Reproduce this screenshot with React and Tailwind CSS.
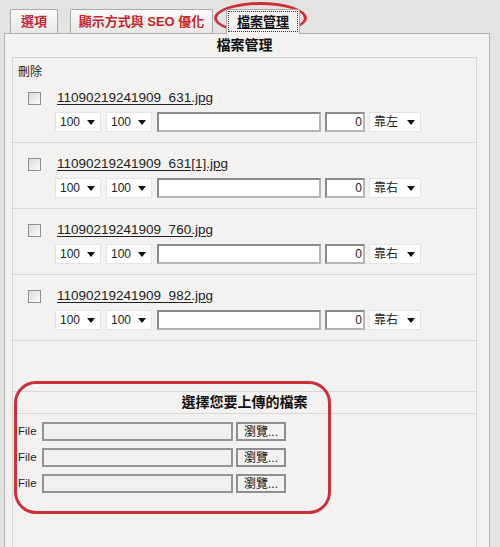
const FONT = { fontFamily: '"Liberation Sans", Arial, "Noto Sans CJK TC", sans-serif' };

const files = [
  { name: '11090219241909_631.jpg', align: '靠左' },
  { name: '11090219241909_631[1].jpg', align: '靠右' },
  { name: '11090219241909_760.jpg', align: '靠右' },
  { name: '11090219241909_982.jpg', align: '靠右' },
];

function Arrow() {
  return (
    <svg width="8" height="5" viewBox="0 0 8 5" className="shrink-0">
      <path d="M0 0h8L4 5z" fill="#111" />
    </svg>
  );
}

function Select({ value, w }) {
  return (
    <div
      className={`${w} h-[20px] bg-white border border-[#e4e4e4] flex items-center justify-between pl-[4px] pr-[5px] text-[12px] text-[#222]`}
    >
      <span>{value}</span>
      <Arrow />
    </div>
  );
}

function FileRow({ file }) {
  return (
    <div className="pl-[15px] pt-[14px] pb-[10px] border-b border-[#d9d8d6]">
      <div className="h-[14px] flex items-center">
        <span className="w-[13px] h-[13px] border border-[#8f8f8f] bg-gradient-to-br from-[#dcdcdc] to-[#fbfbfb] shrink-0" />
        <a className="ml-[16px] text-[13.5px] leading-[14px] text-[#222] underline underline-offset-2">
          {file.name}
        </a>
      </div>
      <div className="mt-[7px] ml-[27px] flex items-center">
        <Select value="100" w="w-[46px]" />
        <div className="ml-[5px]">
          <Select value="100" w="w-[46px]" />
        </div>
        <div className="ml-[5px] w-[164px] h-[20px] bg-white border-2 border-t-[#8a8a8a] border-l-[#8a8a8a] border-b-[#b5b5b5] border-r-[#b5b5b5]" />
        <div className="ml-[4px] w-[40px] h-[20px] bg-white border-2 border-t-[#8a8a8a] border-l-[#8a8a8a] border-b-[#b5b5b5] border-r-[#b5b5b5] flex items-center justify-end pr-[1px] text-[12px] text-[#222]">
          0
        </div>
        <div className="ml-[4px]">
          <Select value={file.align} w="w-[52px]" />
        </div>
      </div>
    </div>
  );
}

function UploadRow() {
  return (
    <div className="flex items-center h-[19px] mb-[7px]">
      <span className="w-[24px] text-[11.5px] text-[#222]">File</span>
      <div className="w-[191px] h-[19px] bg-[#f1f0ee] border-2 border-[#959595]" />
      <div className="ml-[3px] w-[50px] h-[19px] bg-[#f2f2f2] border-2 border-[#8f8f8f] flex items-center justify-center text-[12px] text-[#111]">
        瀏覽...
      </div>
    </div>
  );
}

export default function App() {
  return (
    <div className="relative w-[500px] h-[547px] overflow-hidden bg-[#e5e3e1]" style={FONT}>
      {/* tabs */}
      <div className="h-[33px] flex items-end">
        <div className="ml-[10px] w-[48px] h-[24px] border border-b-0 border-[#aaa] rounded-t-[2px] bg-gradient-to-b from-[#fafafa] to-[#e9e8e6] flex items-center justify-center text-[13px] font-bold text-[#c1272d]">
          選項
        </div>
        <div className="ml-[12px] w-[143px] h-[24px] border border-b-0 border-[#aaa] rounded-t-[2px] bg-gradient-to-b from-[#fafafa] to-[#e9e8e6] flex items-center justify-center text-[13px] font-bold text-[#c1272d]">
          顯示方式與 SEO 優化
        </div>
        <div className="ml-[13px] w-[74px] h-[25px] -mb-px relative z-10 border border-b-0 border-[#aaa] bg-[#f3f2f0] flex items-start justify-center pt-[1px]">
          <span className="w-[70px] h-[21px] border border-dotted border-[#333] flex items-center justify-center text-[13px] font-bold text-[#111] underline underline-offset-2">
            檔案管理
          </span>
        </div>
      </div>

      {/* panel */}
      <div className="ml-[4px] w-[486px] h-[600px] border border-[#b3b3b3] bg-[#f3f2f0] pl-[7px]">
        <div className="w-[465px] h-[23px] flex items-center justify-center text-[14px] font-bold text-[#111]">
          檔案管理
        </div>
        <div className="w-[465px] h-[600px] border border-[#d6d5d3]">
          <div className="h-[19px] pl-[5px] pt-[8px] text-[12px] leading-[12px] text-[#222]">刪除</div>
          {files.map((f) => (
            <FileRow key={f.name} file={f} />
          ))}
          <div className="h-[51px] border-b border-[#d9d8d6]" />
          <div className="h-[22px] flex items-center justify-center text-[14px] font-bold text-[#111] border-b border-[#d9d8d6]">
            選擇您要上傳的檔案
          </div>
          <div className="pl-[5px] pt-[8px]">
            <UploadRow />
            <UploadRow />
            <UploadRow />
          </div>
        </div>
      </div>

      {/* red annotations */}
      <div className="absolute left-[214px] top-[2px] w-[93px] h-[32px] rounded-[50%] border-[3px] border-[#c9303a]" />
      <div className="absolute left-[14px] top-[381px] w-[317px] h-[133px] rounded-[22px] border-[3px] border-[#c9303a]" />
    </div>
  );
}
